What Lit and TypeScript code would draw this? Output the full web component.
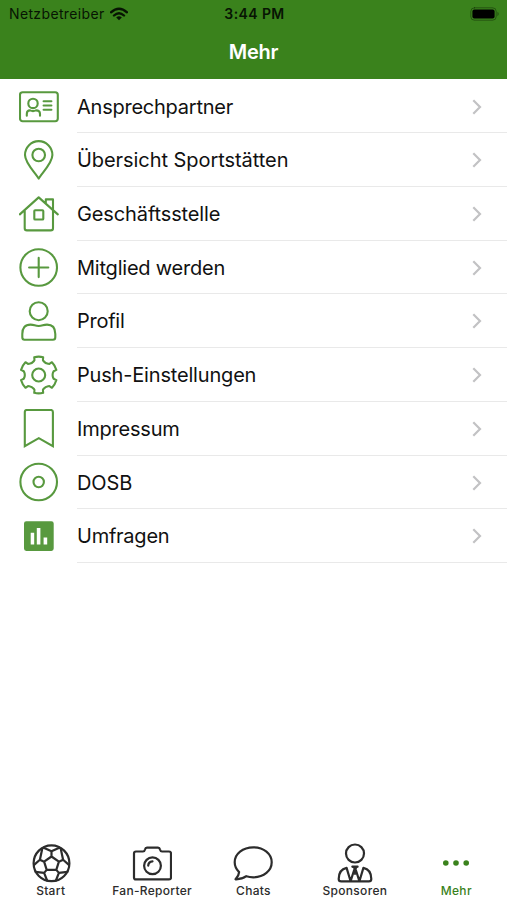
import { LitElement, html, svg, css } from "lit";
import { customElement } from "lit/decorators.js";

const gear = (() => {
  const point = (r: number, deg: number) => {
    const a = (deg * Math.PI) / 180;
    return `${(19.7 + r * Math.sin(a)).toFixed(2)} ${(20 - r * Math.cos(a)).toFixed(2)}`;
  };
  const parts: string[] = [];
  for (let i = 0; i < 6; i++) {
    const d = i * 60;
    parts.push(
      `${i ? "L" : "M"}${point(14.6, d - 20)}`,
      `L${point(15.4, d - 16)}`,
      `L${point(18.4, d - 14)}`,
      `Q${point(19, d)} ${point(18.4, d + 14)}`,
      `L${point(15.4, d + 16)}`,
      `L${point(14.6, d + 20)}`,
      `Q${point(13.4, d + 30)} ${point(14.6, d + 40)}`,
    );
  }
  return parts.join("") + "Z";
})();

const entries = [
  {
    label: "Ansprechpartner",
    tracking: -0.24,
    icon: svg`<rect x="1" y="5.2" width="37.8" height="29" rx="2.6"/><circle cx="14" cy="16.4" r="4.7"/>
      <path d="M7.8 28.8V26.9Q7.8 23.4 11 23.4Q14 24.8 17 23.4Q21 23.4 21 26.9V28.8M24.6 14.2H32.4M24.6 18.5H32.4M24.6 22.8H32.4"/>`,
  },
  {
    label: "Übersicht Sportstätten",
    tracking: -0.06,
    icon: svg`<path d="M19.7 38.6C17.6 34 6 23.5 6 15A13.7 13.9 0 0 1 33.4 15C33.4 23.5 21.8 34 19.7 38.6Z"/><circle cx="19.7" cy="15" r="6.3"/>`,
  },
  {
    label: "Geschäftsstelle",
    tracking: -0.12,
    icon: svg`<path d="M.8 20.4L19.7 3.4L38.8 20.4M5.7 16.4V34.2Q5.7 36.4 7.9 36.4H31.8Q34 36.4 34 34.2V5.4H26.8V9.4"/><rect x="15.3" y="16.3" width="9" height="9.2" rx=".8"/>`,
  },
  {
    label: "Mitglied werden",
    tracking: -0.22,
    icon: svg`<circle cx="19.7" cy="19.5" r="18.3"/><path d="M19.7 9.9V29.1M10.1 19.5H29.3"/>`,
  },
  {
    label: "Profil",
    tracking: -0.25,
    icon: svg`<circle cx="19.7" cy="10.2" r="9"/><path d="M5.5 38.7H34Q36.3 38.7 36.3 36.2V33Q36.3 23.6 28 23.6C24 23.6 23.6 25 19.7 25S15.5 23.6 11.5 23.6Q3.3 23.6 3.3 33V36.2Q3.3 38.7 5.5 38.7Z"/>`,
  },
  {
    label: "Push-Einstellungen",
    tracking: -0.18,
    icon: svg`<path d="${gear}"/><circle cx="19.7" cy="20" r="6.5"/>`,
  },
  {
    label: "Impressum",
    tracking: -0.2,
    icon: svg`<path stroke-linejoin="miter" d="M5.8 37.2V3Q5.8 1 7.8 1H31.9Q33.9 1 33.9 3V37.2L19.8 29.2Z"/>`,
  },
  {
    label: "DOSB",
    tracking: -0.1,
    icon: svg`<circle cx="19.7" cy="20" r="18.3"/><circle cx="19.7" cy="20" r="5.2"/>`,
  },
  {
    label: "Umfragen",
    tracking: -0.24,
    icon: svg`<path fill="currentColor" stroke="none" fill-rule="evenodd" d="M7.3 5.2H32.4Q34.7 5.2 34.7 7.5V32.6Q34.7 34.9 32.4 34.9H7.3Q5 34.9 5 32.6V7.5Q5 5.2 7.3 5.2ZM11.7 16.7V28.4H15.2V16.7ZM17.8 12V28.4H21.4V12ZM24.6 21.4V28.4H28.2V21.4Z"/>`,
  },
];

const tabs = [
  {
    label: "Start",
    icon: svg`<circle cx="20.5" cy="20.3" r="17.9"/>
      <path transform="translate(.5 .3)" d="M20 13.2L27.4 18.4L24.8 26.6H15.2L12.6 18.4ZM20 13.2V8M27.4 18.4L31.6 16.4M24.8 26.6L27.4 29.6M15.2 26.6L12.6 29.6M12.6 18.4L8.4 16.4M12.2 4.4L20 8L27.8 4.4M29.2 5.2L31.6 16.4L37.4 21.6M36 28.6L27.4 29.6L24.4 37.2M4 28.6L12.6 29.6L15.6 37.2M10.8 5.2L8.4 16.4L2.6 21.6"/>`,
  },
  {
    label: "Fan-Reporter",
    icon: svg`<path d="M4 8.5H11Q12.5 8.5 13 6.5Q13.4 4.6 15 4.6H26Q27.6 4.6 28 6.5Q28.5 8.5 30 8.5H37Q39 8.5 39 10.5V34.4Q39 36.4 37 36.4H4Q2 36.4 2 34.4V10.5Q2 8.5 4 8.5Z"/><circle cx="20.5" cy="22.8" r="8.4"/><path d="M16.2 22.6Q16.5 18.8 20.5 18.4"/>`,
  },
  {
    label: "Chats",
    icon: svg`<path d="M20.3 4.3C30.8 4.3 38.7 10.9 38.7 19.3S30.8 34.3 20.3 34.3Q16.6 34.3 13.3 33.2Q8.9 36.5 2.5 36.3Q5.9 32.9 6.1 29.1Q1.7 24.9 1.7 19.3C1.7 10.9 9.8 4.3 20.3 4.3Z"/>`,
  },
  {
    label: "Sponsoren",
    icon: svg`<circle cx="20" cy="10.5" r="9"/><path d="M11.6 24.9Q3.7 26.6 3.7 36Q3.7 38.4 6.2 38.4H33.8Q36.3 38.4 36.3 36Q36.3 26.6 28.4 24.9M11.6 24.9L15.6 38.2L19 27.5M28.4 24.9L24.4 38.2L21 27.5M17.4 23.7H22.6"/><path fill="currentColor" stroke-width="1" d="M17.6 23.7H22.4L20.9 26.2L21.6 29.4L20 31.8L18.4 29.4L19.1 26.2Z"/>`,
  },
  {
    label: "Mehr",
    icon: svg`<g fill="currentColor" stroke="none"><circle cx="9.8" cy="20" r="2.8"/><circle cx="20" cy="20" r="2.8"/><circle cx="30.2" cy="20" r="2.8"/></g>`,
  },
];

@customElement("app-root")
export class AppRoot extends LitElement {
  static styles = css`
    :host {
      display: flex;
      flex-direction: column;
      height: 900px;
      background: #fff;
      color: #111;
      font-family: Inter, "Liberation Sans", sans-serif;
      overflow: hidden;
    }
    svg { display: block; fill: none; stroke: currentColor; stroke-linecap: round; stroke-linejoin: round; }
    header { height: 79px; flex: none; background: #3a821c; }
    .status {
      display: grid;
      grid-template-columns: 1fr auto 1fr;
      align-items: center;
      height: 27px;
      padding: 0 7px 0 9px;
      font-size: 14px;
      color: #071403;
    }
    .carrier { display: flex; align-items: center; gap: 5px; letter-spacing: 0.36px; }
    .clock { font-weight: 600; letter-spacing: 0.4px; }
    .battery { justify-self: end; }
    h1 { margin: 0; height: 50px; line-height: 51px; text-align: center; color: #fff; font-size: 20px; font-weight: 600; letter-spacing: -0.2px; }
    .list { flex: 1; padding-top: 0.7px; }
    .row { display: flex; height: 53.7px; padding-left: 19px; }
    .glyph { width: 40px; margin-right: 18px; display: flex; align-items: center; color: #58993f; stroke-width: 2.1px; }
    .body {
      flex: 1;
      display: flex;
      align-items: center;
      justify-content: space-between;
      box-sizing: border-box;
      border-bottom: 1px solid #e9e9e9;
      padding: 1.4px 24px 0 0;
      font-size: 20px;
    }
    .chevron { color: #c2c2c4; stroke-width: 2.2px; }
    nav { display: grid; grid-template-columns: repeat(5, 1fr); height: 57px; flex: none; }
    .tab { display: flex; flex-direction: column; align-items: center; color: #2c2c2c; stroke-width: 2.2px; font-size: 12px; font-weight: 500; letter-spacing: 0.3px; line-height: 15px; }
    .active { color: #3a821c; }
  `;

  render() {
    return html`
      <header>
        <div class="status">
          <span class="carrier">Netzbetreiber
            <svg width="18" height="14" viewBox="0 0 18 14" stroke-width="2.4" stroke-linecap="butt">
              <path d="M1 5.3Q9-2 17 5.3M4 8.5Q9 3.8 14 8.5" />
              <path d="M6.2 10.4Q9 8.2 11.8 10.4L9 13.3Z" fill="currentColor" stroke="none" />
            </svg>
          </span>
          <span class="clock">3:44 PM</span>
          <svg class="battery" width="30" height="14" viewBox="0 0 30 14">
            <rect x=".8" y=".8" width="25.4" height="12.4" rx="3.6" stroke-opacity=".4" />
            <rect x="2.4" y="2.4" width="22.2" height="9.2" rx="2" fill="#000" stroke="none" />
            <path d="M27.5 4.8Q29.8 7 27.5 9.2Z" fill="currentColor" stroke="none" opacity=".5" />
          </svg>
        </div>
        <h1>Mehr</h1>
      </header>
      <main class="list">
        ${entries.map(
          (e) => html`<div class="row">
            <span class="glyph"><svg width="40" height="40" viewBox="0 0 40 40">${e.icon}</svg></span>
            <span class="body"><span style="letter-spacing:${e.tracking}px">${e.label}</span>
              <svg class="chevron" width="12" height="16" viewBox="0 0 12 16"><path stroke-linecap="butt" stroke-linejoin="miter" d="M2.3 1.3L9 8L2.3 14.7" /></svg>
            </span>
          </div>`,
        )}
      </main>
      <nav>
        ${tabs.map(
          (t) => html`<div class="tab ${t.label === "Mehr" ? "active" : ""}">
            <svg width="40" height="40" viewBox="0 0 40 40">${t.icon}</svg>${t.label}
          </div>`,
        )}
      </nav>
    `;
  }
}
